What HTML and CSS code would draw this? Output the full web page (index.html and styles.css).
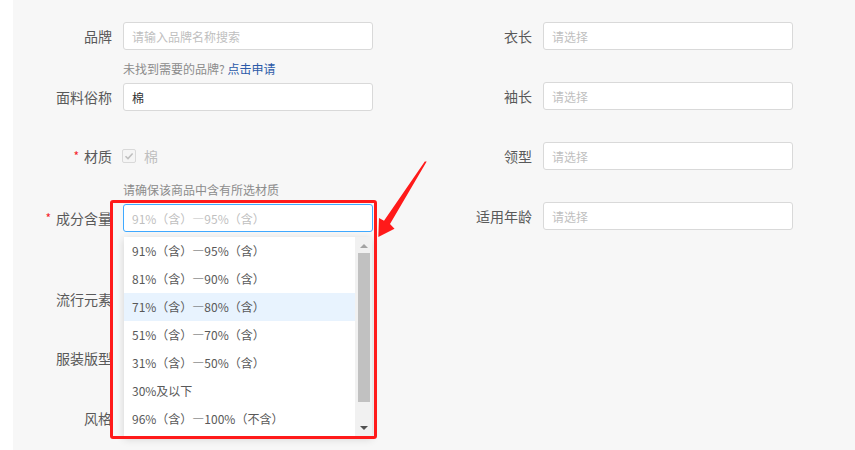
FILE: index.html
```html
<!DOCTYPE html>
<html lang="zh-CN">
<head>
<meta charset="utf-8">
<title>商品属性</title>
<link rel="stylesheet" href="styles.css">
</head>
<body>
<div class="page">
  <div class="form">
    <div class="col">
      <div class="item mt-22">
        <div class="label">品牌</div>
        <div class="input placeholder">请输入品牌名称搜索</div>
      </div>
      <div class="help mt-9">未找到需要的品牌? <span class="link">点击申请</span></div>
      <div class="item mt-4">
        <div class="label">面料俗称</div>
        <div class="input value">棉</div>
      </div>
      <div class="item mt-31">
        <div class="label"><span class="req">*</span>材质</div>
        <div class="checkbox-wrap">
          <span class="checkbox">
            <svg width="10" height="10" viewBox="0 0 10 10"><path d="M1.5 5.2 L4 7.6 L8.6 2.4" fill="none" stroke="#bfbfbf" stroke-width="1.5"/></svg>
          </span>
          <span class="checkbox-text">棉</span>
        </div>
      </div>
      <div class="help mt-10">请确保该商品中含有所选材质</div>
      <div class="item mt-4">
        <div class="label"><span class="req">*</span>成分含量</div>
        <div class="control">
          <div class="input focused placeholder">91%（含）—95%（含）</div>
          <div class="dropdown">
            <div class="options">
              <div class="option">91%（含）—95%（含）</div>
              <div class="option">81%（含）—90%（含）</div>
              <div class="option active">71%（含）—80%（含）</div>
              <div class="option">51%（含）—70%（含）</div>
              <div class="option">31%（含）—50%（含）</div>
              <div class="option">30%及以下</div>
              <div class="option">96%（含）—100%（不含）</div>
            </div>
            <div class="scrollbar">
              <span class="arrow-up"></span>
              <span class="thumb"></span>
              <span class="arrow-down"></span>
            </div>
          </div>
        </div>
      </div>
      <div class="item mt-53">
        <div class="label">流行元素</div>
      </div>
      <div class="item mt-31">
        <div class="label">服装版型</div>
      </div>
      <div class="item mt-32">
        <div class="label">风格</div>
      </div>
    </div>
    <div class="col">
      <div class="item mt-22">
        <div class="label">衣长</div>
        <div class="input placeholder">请选择</div>
      </div>
      <div class="item mt-32">
        <div class="label">袖长</div>
        <div class="input placeholder">请选择</div>
      </div>
      <div class="item mt-32">
        <div class="label">领型</div>
        <div class="input placeholder">请选择</div>
      </div>
      <div class="item mt-32">
        <div class="label">适用年龄</div>
        <div class="input placeholder">请选择</div>
      </div>
    </div>
  </div>
  <div class="highlight-box"></div>
  <svg class="annot-arrow" width="80" height="100" viewBox="0 0 80 100">
    <polygon points="66.7,11.5 30,74 34.5,78.7 18.3,87 19,68 24,70.7 64.8,11.5" fill="#ff1a1a"/>
  </svg>
</div>
</body>
</html>
```

FILE: styles.css
```css
html, body {
  margin: 0;
  padding: 0;
  background: #ffffff;
  font-family: "Noto Sans CJK SC", "Noto Sans", sans-serif;
}

.page {
  position: relative;
  margin-left: 13px;
  height: 450px;
  background: #f7f7f7;
  overflow: hidden;
}

.form {
  display: flex;
  gap: 60px;
}

.col {
  width: 360px;
  display: flex;
  flex-direction: column;
}

.item {
  display: flex;
  align-items: center;
  height: 28px;
}

.mt-4 { margin-top: 4px; }
.mt-9 { margin-top: 9px; }
.mt-10 { margin-top: 10px; }
.mt-22 { margin-top: 22px; }
.mt-31 { margin-top: 31px; }
.mt-32 { margin-top: 32px; }
.mt-53 { margin-top: 53px; }

.label {
  width: 99px;
  margin-right: 11px;
  text-align: right;
  font-size: 14px;
  line-height: 20px;
  color: #595959;
  white-space: nowrap;
}

.req {
  color: #f5222d;
  font-size: 12px;
  margin-right: 5px;
  position: relative;
  top: -1px;
}

.control {
  position: relative;
}

.input {
  width: 250px;
  height: 28px;
  box-sizing: border-box;
  border: 1px solid #d9d9d9;
  border-radius: 3px;
  background: #ffffff;
  padding: 0 8px;
  font-size: 12px;
  display: flex;
  align-items: center;
  white-space: nowrap;
}

.placeholder { color: #bfbfbf; }
.value { color: #333333; }

.focused {
  border-color: #40a9ff;
}

.help {
  margin-left: 110px;
  font-size: 12px;
  line-height: 20px;
  color: #8c8c8c;
}

.link {
  color: #2b5aa8;
}

.checkbox-wrap {
  display: flex;
  align-items: center;
  gap: 8px;
  margin-left: -1px;
}

.checkbox {
  width: 14px;
  height: 14px;
  box-sizing: border-box;
  border: 1px solid #d9d9d9;
  border-radius: 2px;
  background: #f5f5f5;
  display: flex;
  align-items: center;
  justify-content: center;
}

.checkbox-text {
  font-size: 14px;
  color: #bfbfbf;
}

.dropdown {
  position: absolute;
  left: 1px;
  top: 33px;
  width: 248px;
  height: 200px;
  background: #ffffff;
  box-shadow: 0 2px 8px rgba(0, 0, 0, 0.15);
  display: flex;
  overflow: hidden;
  z-index: 2;
}

.options {
  flex: 1;
}

.option {
  height: 28px;
  line-height: 28px;
  padding-left: 8px;
  font-size: 12px;
  color: #595959;
  white-space: nowrap;
}

.option.active {
  background: #e8f3fe;
}

.scrollbar {
  width: 17px;
  background: #f1f1f1;
  display: flex;
  flex-direction: column;
  align-items: center;
  padding-top: 7px;
  box-sizing: border-box;
}

.arrow-up {
  width: 0;
  height: 0;
  border-left: 4px solid transparent;
  border-right: 4px solid transparent;
  border-bottom: 4px solid #a3a3a3;
}

.thumb {
  width: 12px;
  height: 149px;
  margin-top: 5px;
  background: #c1c1c1;
}

.arrow-down {
  width: 0;
  height: 0;
  margin-top: 24px;
  border-left: 4px solid transparent;
  border-right: 4px solid transparent;
  border-top: 4px solid #505050;
}

.highlight-box {
  position: absolute;
  left: 97px;
  top: 200px;
  width: 267px;
  height: 239px;
  box-sizing: border-box;
  border: 3px solid #ff1a1a;
  border-radius: 3px;
  z-index: 3;
}

.annot-arrow {
  position: absolute;
  left: 347px;
  top: 150px;
  z-index: 3;
}
```
